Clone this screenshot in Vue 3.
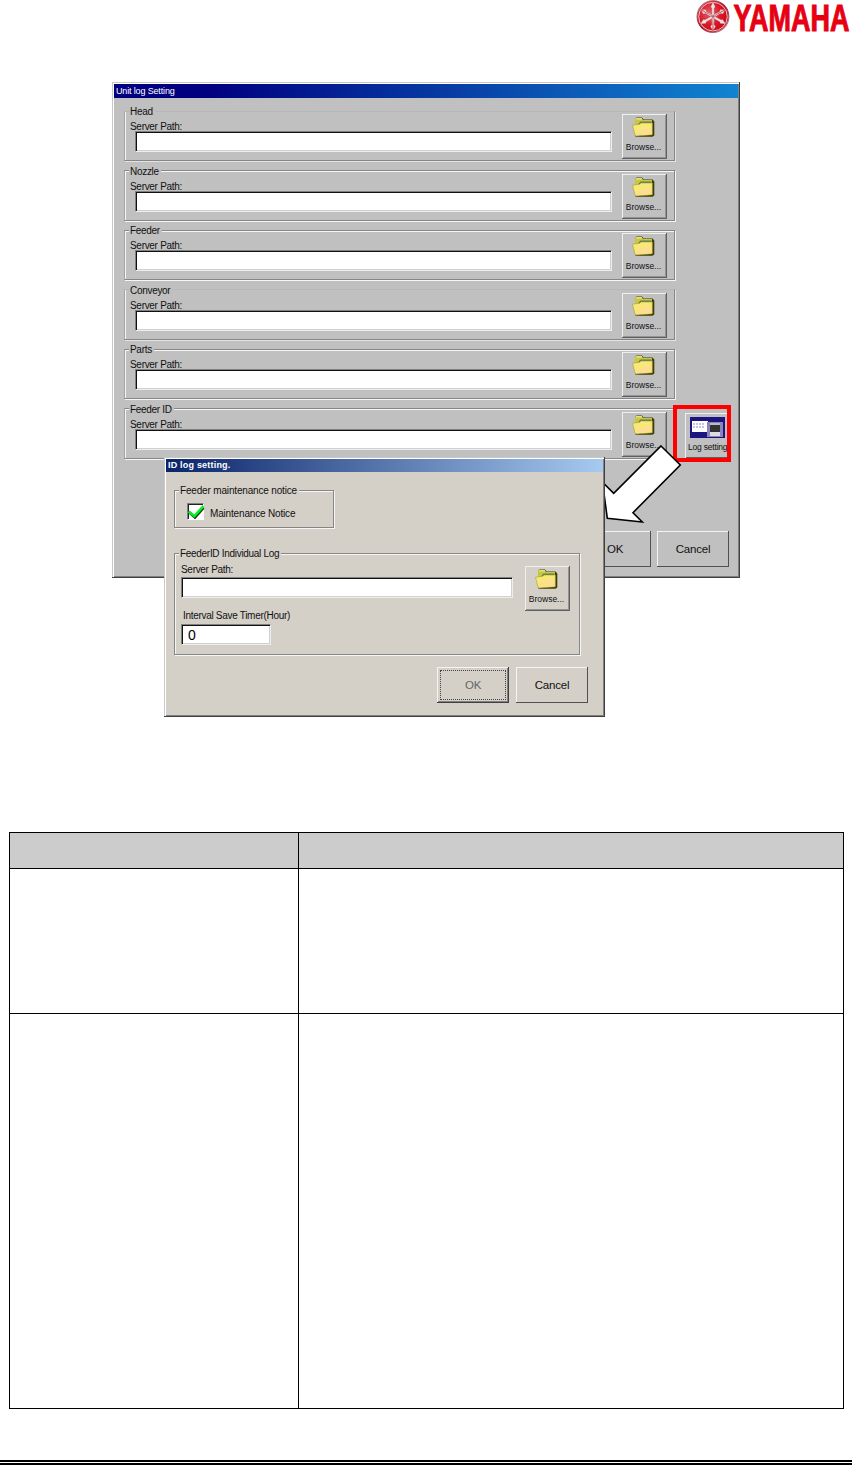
<script setup>
  import { ref } from 'vue';

  const units = ref([
    { name: 'Head', path: '', faint: true },
    { name: 'Nozzle', path: '' },
    { name: 'Feeder', path: '' },
    { name: 'Conveyor', path: '', faint: true },
    { name: 'Parts', path: '' },
    { name: 'Feeder ID', path: '' }
  ]);

  const notice = ref(true);
  const individualPath = ref('');
  const interval = ref('0');
</script>

<template>
  <!-- shared folder drawing -->
  <svg class="defs" width="0" height="0">
    <symbol id="folder" viewBox="0 0 23 20">
      <path d="M3 7V2.5L4.5.5H10L11.5 2.5H20.5L22.3 4.5V18.5L20.5 19.8H3.5z" fill="#3c3c08" />
      <path d="M3 8V2.5L4.5 1H9.5L11 3H20V9H3z" fill="#c9c640" />
      <path d="M3.5 2.5L4.5 1H9.5L10.5 2.5z" fill="#e6e37a" />
      <path d="M7 6.2L8.5 4.5H19.5V8H6z" fill="#5d7862" />
      <path d="M.5 8.2L7.5 7.3L9 6H20.3V17.8L4 19L3 18z" fill="#f8e878" stroke="#a5a12a" stroke-width=".6" />
      <path d="M5 14L19.5 10V17.3L4.4 18.2z" fill="#ffdb9a" opacity=".75" />
    </symbol>
  </svg>

  <div class="page">
    <header class="brand">
      <svg width="156" height="34" viewBox="0 0 156 34">
        <defs>
          <radialGradient id="disc" cx=".4" cy=".4" r=".75">
            <stop offset="0" stop-color="#e8606a" />
            <stop offset=".5" stop-color="#dc1426" />
            <stop offset="1" stop-color="#c00010" />
          </radialGradient>
          <linearGradient id="rim" x1="0" y1="0" x2="1" y2="1">
            <stop offset="0" stop-color="#c98a8e" />
            <stop offset=".5" stop-color="#9a1a26" />
            <stop offset="1" stop-color="#c8a8a8" />
          </linearGradient>
        </defs>
        <circle cx="17" cy="16.6" r="15.8" fill="url(#disc)" stroke="url(#rim)" stroke-width="1.3" />
        <circle cx="17" cy="16.6" r="14.3" fill="none" stroke="#eec4c6" stroke-width="1" />
        <g v-for="a in [0, 120, 240]" :key="a" :transform="`rotate(${a} 17 16.6)`" fill="#ece4e4" stroke="#a8323c" stroke-width=".3">
          <path d="M17 1.8L19.4 7L18.2 8V14.4L17 16.6L15.8 14.4V8L14.6 7z" />
          <path d="M17 16.6L15.6 18.5L15.9 24.5L14.4 26.5L16.7 30.5z" />
          <path d="M17 16.6L18.4 18.5L18.1 24.5L19.6 26.5L17.3 30.5z" />
        </g>
        <text x="37.5" y="31.2" textLength="116" lengthAdjust="spacingAndGlyphs">YAMAHA</text>
      </svg>
    </header>

    <section class="figure">
      <div class="window">
        <div class="title">Unit log Setting</div>
        <div class="units">
          <div v-for="unit in units" :key="unit.name" class="unit">
            <fieldset class="group" :class="{ faint: unit.faint }">
              <legend>{{ unit.name }}</legend>
              <div class="line">
                <label class="path">
                  <span>Server Path:</span>
                  <input v-model="unit.path" type="text">
                </label>
                <button class="browse">
                  <svg width="23" height="20"><use href="#folder" /></svg>
                  <span>Browse...</span>
                </button>
              </div>
            </fieldset>
            <div v-if="unit.name === 'Feeder ID'" class="highlight">
              <button class="browse log">
                <svg width="35" height="21" viewBox="0 0 35 21">
                  <path d="M0 0H35V21H0z" fill="#1c1480" />
                  <path d="M2 4H18V15H2z" fill="#fff" />
                  <path d="M3 7H15M3 10H14" stroke="#8d8dc8" stroke-dasharray="2 1" />
                  <path d="M17 5H33V20H17z" fill="#8d83b8" />
                  <path d="M20 6H30V16H20z" fill="#333" />
                  <path d="M20 15H30V19H20z" fill="#ddd" />
                  <path d="M20 6H30V8H20z" fill="#b9b9c9" />
                </svg>
                <span>Log setting</span>
              </button>
            </div>
          </div>
        </div>
        <div class="actions">
          <button class="push">OK</button>
          <button class="push">Cancel</button>
        </div>
      </div>

      <svg class="arrow" width="90" height="84" viewBox="0 0 90 84">
        <path d="M71 4L90.3 23L43 70.7L52.3 80L17.3 76.3L12.5 40.3L23.7 51.3z" fill="#fff" stroke="#000" stroke-width="1.6" />
      </svg>

      <div class="window dialog">
        <div class="title">ID log setting.</div>
        <fieldset class="group maintenance">
          <legend>Feeder maintenance notice</legend>
          <label class="check">
            <span class="box" @click="notice = !notice">
              <svg v-if="notice" width="17" height="15" viewBox="0 0 17 15">
                <path d="M1 8L7 13.5L15.5 4" fill="none" stroke="#153c15" stroke-width="2.6" />
                <path d="M.5 7.5L6.5 12L15.5 2" fill="none" stroke="#00f020" stroke-width="2.6" />
              </svg>
            </span>
            <span class="caption">Maintenance Notice</span>
          </label>
        </fieldset>
        <fieldset class="group individual">
          <legend>FeederID Individual Log</legend>
          <div class="line">
            <label class="path">
              <span>Server Path:</span>
              <input v-model="individualPath" type="text">
            </label>
            <button class="browse">
              <svg width="23" height="20"><use href="#folder" /></svg>
              <span>Browse...</span>
            </button>
          </div>
          <label class="timer">
            <span>Interval Save Timer(Hour)</span>
            <input v-model="interval" type="text">
          </label>
        </fieldset>
        <div class="actions">
          <button class="push focused">OK</button>
          <button class="push">Cancel</button>
        </div>
      </div>
    </section>

    <table class="items">
      <thead>
        <tr><th></th><th></th></tr>
      </thead>
      <tbody>
        <tr class="short"><td></td><td></td></tr>
        <tr class="tall"><td></td><td></td></tr>
      </tbody>
    </table>

    <footer class="rule"></footer>
  </div>
</template>

<style>
  body {
    margin: 0;
    background: #fff;
  }
</style>

<style scoped>
  * {
    box-sizing: border-box;
  }

  .defs {
    position: absolute;
  }

  .page {
    display: flex;
    flex-direction: column;
    width: 852px;
    height: 1465px;
    overflow: hidden;
    font: 10px/10px "Liberation Sans", Arial, sans-serif;
    letter-spacing: -0.3px;
    color: #111;
  }

  .brand {
    display: flex;
    justify-content: flex-end;
    height: 82px;

    svg {
      overflow: visible;
    }

    text {
      font: bold 37px "Liberation Sans", Arial, sans-serif;
      letter-spacing: 0;
      fill: #e60012;
      stroke: #e60012;
      stroke-width: 1px;
    }
  }

  .figure {
    position: relative;
    height: 750px;
    padding-left: 112px;
  }

  .window {
    width: 628px;
    height: 496px;
    padding: 2px 1px 0 2px;
    background: #c0c0c0;
    border-right: 1px solid #404040;
    border-bottom: 1px solid #404040;
    box-shadow: inset 1px 1px #c8c8c8, inset 2px 2px #fff, inset -1px -1px #808080;
  }

  .title {
    height: 14px;
    padding-left: 2px;
    font-size: 9px;
    line-height: 14px;
    letter-spacing: -0.15px;
    color: #fff;
    background: linear-gradient(to right, #000080 15%, #1084d0);
  }

  .units {
    display: flex;
    flex-direction: column;
    gap: 4.6px;
    padding: 8px 0 0 10px;
  }

  .unit {
    display: flex;
    height: 55px;
  }

  .group {
    width: 551px;
    height: 55px;
    margin: 0;
    padding: 0;
    border: 1px solid #868686;
    border-left-color: #a4a4a4;
    box-shadow: inset 1px 1px #f6f6f6, 1px 1px #f6f6f6;

    &.faint {
      border-top-color: #b6b6b6;
      box-shadow: inset 1px 0 #f6f6f6, 1px 1px #e4e4e4;
    }
  }

  legend {
    height: 10px;
    margin-left: 4px;
    padding: 0 2px 0 1px;
    line-height: 12px;
    background: #c0c0c0;
  }

  .line {
    display: flex;
  }

  .path {
    display: flex;
    flex-direction: column;
    width: 497px;
    padding: 5px 0 0 5px;

    input {
      width: 477px;
      margin: 0 0 0 5px;
    }
  }

  .path span {
    height: 10px;
    line-height: 11px;
  }

  input {
    height: 21px;
    padding: 0 6px;
    font: 14px "Liberation Sans", Arial, sans-serif;
    background: #fff;
    border: 1px solid #808080;
    border-right-color: #eee;
    border-bottom-color: #eee;
    border-radius: 0;
    outline: none;
    box-shadow: inset 1px 1px #111, inset -1px -1px #d0d0d0;
  }

  button {
    padding: 0;
    font-family: inherit;
    color: #111;
    background: inherit;
    border: none;
    box-shadow: inset -1px -1px #606060, inset 1px 1px #f0f0f0, inset -2px -2px #949494;
  }

  .browse {
    display: flex;
    flex-direction: column;
    align-items: center;
    flex: none;
    width: 45px;
    height: 45px;
    margin-top: -2px;
    padding-top: 3px;
    font-size: 8.5px;
    line-height: 10px;
    letter-spacing: 0;

    svg {
      margin-right: 2px;
    }

    span {
      margin-top: 5px;
      margin-right: 2px;
    }
  }

  .highlight {
    flex: none;
    width: 58px;
    height: 57px;
    margin: 1px 0 0 -2px;
    padding-left: 8px;
    border: 4px solid #f00;
    overflow: hidden;
  }

  .log {
    width: 50px;
    margin-top: 4px;
    padding-top: 4px;
    align-items: flex-start;
    white-space: nowrap;
    box-shadow: inset 1px 1px #f0f0f0, inset 0 -1px #606060;

    svg {
      margin: 0 0 0 5px;
    }

    span {
      margin: 4px 0 0 3px;
      letter-spacing: -0.2px;
    }
  }

  .actions {
    display: flex;
    justify-content: flex-end;
    gap: 6px;
    padding: 72px 9px 0 0;
  }

  .push {
    width: 72px;
    height: 36px;
    font-size: 11.5px;
    letter-spacing: -0.2px;
    box-shadow: inset -1px -1px #505050, inset 1px 1px #f4f4f4;
  }

  .arrow {
    position: absolute;
    left: 590px;
    top: 360px;
    overflow: visible;
  }

  .dialog {
    position: absolute;
    left: 164px;
    top: 375px;
    width: 441px;
    height: 260px;
    background: #d4d0c8;

    .title {
      height: 13px;
      font-weight: bold;
      line-height: 13px;
      letter-spacing: 0.2px;
      background: linear-gradient(to right, #0a246a, #a6caf0);
    }

    legend {
      background: #d4d0c8;
    }

    .group {
      margin-left: 8px;
      border-left-color: #868686;
    }

    .maintenance {
      width: 160px;
      height: 43px;
      margin-top: 13px;
      letter-spacing: -0.17px;
    }

    .individual {
      width: 406px;
      height: 107px;
      margin-top: 20px;

      .path {
        width: 350px;
        padding: 6px 0 0 6px;
      }

      .path span {
        height: 13px;
      }

      .path input {
        width: 332px;
        margin-left: 0;
      }

      .browse {
        margin-top: 8px;
      }
    }

    .actions {
      padding: 12px 15px 0 0;
      gap: 7px;
    }
  }

  .check {
    display: flex;
    align-items: center;
    gap: 6px;
    padding: 8px 0 0 12px;
  }

  .caption {
    padding-top: 4px;
  }

  .box {
    width: 17px;
    height: 17px;
    background: #fff;
    border: 1px solid #808080;
    border-right-color: #fff;
    border-bottom-color: #fff;
    box-shadow: inset 1px 1px #222;

    svg {
      display: block;
    }
  }

  .timer {
    display: flex;
    flex-direction: column;
    padding: 0 0 0 6px;

    span {
      height: 13px;
      padding-left: 2px;
    }

    input {
      width: 90px;
    }
  }

  .focused {
    color: #666;
    outline: 1px dotted #444;
    outline-offset: -4px;
    box-shadow: inset -1px -1px #404040, inset 1px 1px #f4f4f4, inset -2px -2px #808080;
  }

  .items {
    width: 835px;
    margin-left: 9px;
    border-collapse: collapse;
    table-layout: fixed;

    th,
    td {
      padding: 0;
      border: 1px solid #000;
    }

    th {
      height: 36px;
      background: #ccc;
    }

    th:first-child {
      width: 289px;
    }

    .short td {
      height: 145px;
    }

    .tall td {
      height: 395px;
    }
  }

  .rule {
    height: 5px;
    margin-top: auto;
    border-top: 2px solid #000;
    border-bottom: 2px solid #000;
  }
</style>
